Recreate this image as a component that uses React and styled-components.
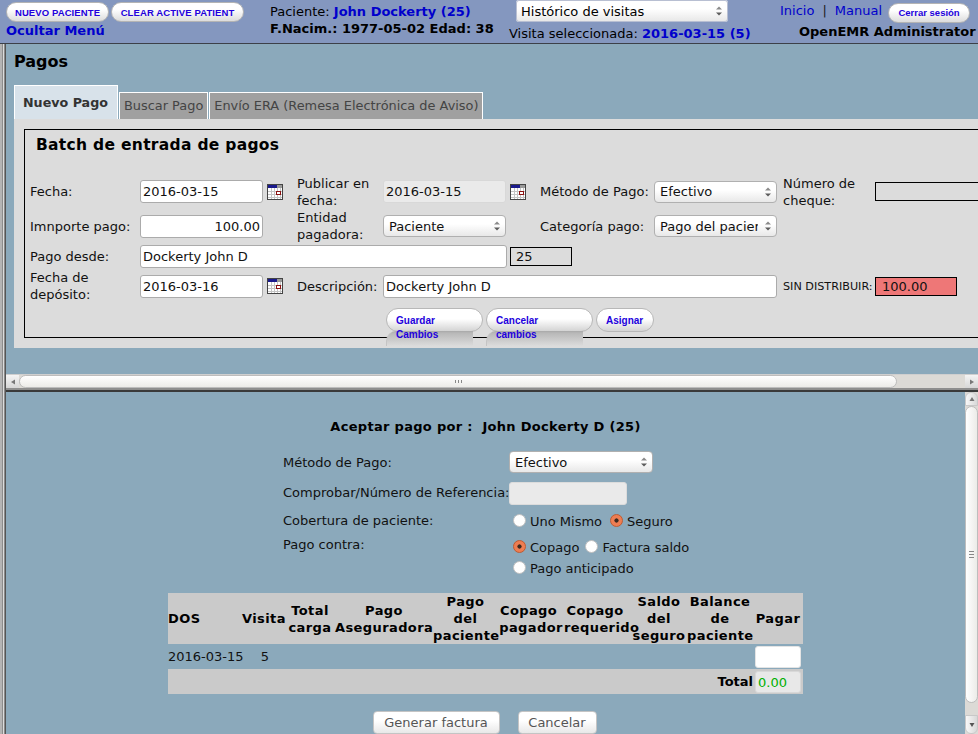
import React from 'react';
import styled, { createGlobalStyle } from 'styled-components';

const Global = createGlobalStyle`
  html, body { margin: 0; padding: 0; height: 734px; overflow: hidden; }
  body { font-family: "DejaVu Sans", sans-serif; font-size: 13px; color: #000; }
  * { box-sizing: border-box; }
`;

const Page = styled.div`
  width: 978px;
  height: 734px;
  display: flex;
  flex-direction: column;
  overflow: hidden;
`;

const Header = styled.header`
  height: 44px;
  flex: none;
  display: grid;
  grid-template-columns: 264px 245px 262px 207px;
  background: #8497bf;
  border-bottom: 1px solid #3c4048;
`;

const HeaderCol = styled.div`
  display: flex;
  flex-direction: column;
  padding: ${p => p.$pad || '0'};
  white-space: nowrap;
`;

const ButtonRow = styled.div`
  display: flex;
  gap: 2px;
  padding: 2px 0 0 6px;
`;

const PillButton = styled.a`
  display: inline-flex;
  align-items: center;
  justify-content: center;
  height: 20px;
  width: ${p => p.$w}px;
  border: 1px solid #b4b4b4;
  border-radius: 10px;
  background: linear-gradient(#fff 35%, #dcdcdc);
  color: #2200dd;
  font: bold 9.5px "Liberation Sans", sans-serif;
  letter-spacing: 0.1px;
  white-space: nowrap;
`;

const HideMenu = styled.a`
  font-weight: bold;
  font-size: 13px;
  line-height: 16px;
  color: #0000cc;
  padding: 0 0 0 6px;
  margin-top: 1px;
`;

const PatientLine = styled.div`
  font-size: 13px;
  line-height: 18px;
  margin-top: ${p => p.$mt || 0}px;
`;

const PatientLink = styled.span`
  font-weight: bold;
  color: #0000cc;
`;

const BoldLine = styled.div`
  font-weight: bold;
  font-size: 13px;
  line-height: 16px;
`;

const VisitSelect = styled.div`
  width: 212px;
  height: 22px;
  margin-left: 7px;
  display: flex;
  align-items: center;
  justify-content: space-between;
  padding: 0 5px 0 5px;
  background: linear-gradient(#fff 40%, #e6e6e6);
  border-radius: 3px;
  box-shadow: 0 0 0 1px #b8bfd2 inset;
  font-size: 13px;
`;

const ArrowsSvg = styled.svg`
  width: 8px;
  height: 12px;
  flex: none;
`;

const SelectArrows = () => (
  <ArrowsSvg viewBox="0 0 8 12">
    <path d="M4 1.5 7 4.5H1z" fill="#8a8a8a" />
    <path d="M4 10.5 1 7.5h6z" fill="#5c5c5c" />
  </ArrowsSvg>
);

const TopLinks = styled.div`
  display: flex;
  align-items: center;
  height: 21px;
  font-size: 13px;
  color: #0000cc;
`;

const LinkSep = styled.span`
  color: #222;
  margin: 0 8px;
`;

const SignOut = styled(PillButton)`
  margin-left: 6px;
  margin-top: 4px;
  flex: none;
  letter-spacing: 0;
`;

const UserName = styled.div`
  font-weight: bold;
  font-size: 13px;
  line-height: 16px;
  margin-top: 3px;
  padding-left: 19px;
`;

const Body = styled.div`
  flex: 1;
  min-height: 0;
  display: flex;
`;

const LeftEdge = styled.div`
  width: 6px;
  flex: none;
  background: linear-gradient(90deg, #b4b4b4 0 2px, #8c8c8c 2px 3px, #dcdcdc 3px 4px, #8a8a8a 4px 5px, #555 5px);
`;

const Frames = styled.div`
  flex: 1;
  min-width: 0;
  display: flex;
  flex-direction: column;
`;

const TopFrame = styled.section`
  height: 330px;
  flex: none;
  background: #8ba9bb;
  padding: 0 0 0 8px;
  overflow: hidden;
`;

const PageTitle = styled.h1`
  margin: 0;
  padding-top: 8px;
  height: 41px;
  font-size: 16px;
  line-height: 19px;
  font-weight: bold;
`;

const Tabs = styled.div`
  display: flex;
  align-items: flex-end;
  height: 34px;
  gap: 1px;
`;

const Tab = styled.div`
  height: 27px;
  padding: 0 4px;
  line-height: 26px;
  border: 1px solid #fff;
  border-bottom: none;
  background: #a0a0a0;
  color: #444;
  font-size: 12.9px;
  white-space: nowrap;
`;

const ActiveTab = styled(Tab)`
  width: 104px;
  height: 34px;
  padding: 0 0 0 8px;
  line-height: 34px;
  background: #d8e2ea;
  color: #333;
  font-size: 12.7px;
  font-weight: bold;
`;

const TabPanel = styled.div`
  background: #dcdcdc;
  height: 229px;
  width: 990px;
  padding: 10px 0 0 10px;
`;

const BatchBox = styled.div`
  height: 209px;
  border: 1px solid #000;
  border-right: none;
`;

const BatchTitle = styled.h2`
  margin: 0;
  height: 45px;
  padding: 5px 0 0 11px;
  font-size: 15.5px;
  line-height: 20px;
  font-weight: bold;
  letter-spacing: 0.3px;
`;

const BatchGrid = styled.div`
  display: grid;
  grid-template-columns: 110px 157px 86px 157px 114px 129px 92px 120px;
  grid-template-rows: 33px 36px 24px 36px;
  padding-left: 5px;
  align-items: center;
  font-size: 13px;
  line-height: 17px;
  color: #111;
`;

const TextField = styled.div`
  flex: none;
  width: ${p => p.$w}px;
  height: 23px;
  padding: 0 2px;
  background: ${p => p.$off ? '#eaeaea' : '#fff'};
  border: 1px solid ${p => p.$off ? '#d8d8d8' : '#ababab'};
  border-radius: 3px;
  font-size: 13px;
  line-height: 21px;
  text-align: ${p => p.$right ? 'right' : 'left'};
  overflow: hidden;
  white-space: nowrap;
`;

const WideCell = styled.div`
  display: flex;
  align-items: center;
  grid-column: ${p => p.$span};
`;

const DateCell = styled.div`
  display: flex;
  align-items: center;
  gap: 4px;
`;

const CalSvg = styled.svg`
  width: 16px;
  height: 16px;
  flex: none;
`;

const CalIcon = () => (
  <CalSvg viewBox="0 0 16 16" shapeRendering="crispEdges">
    <rect x="0.5" y="0.5" width="15" height="15" fill="#fff" stroke="#444" />
    <rect x="1" y="1" width="9" height="3" fill="#1a1a8c" />
    <rect x="10" y="1" width="5" height="3" fill="#999" />
    <path d="M1 7h14M1 10h14M1 13h14M4 4v11M7 4v11M10 4v11M13 4v11" stroke="#c4c4c4" fill="none" />
    <rect x="9.5" y="7.5" width="4" height="3" fill="#fff" stroke="#8c1010" />
  </CalSvg>
);

const SelectBox = styled.div`
  width: ${p => p.$w}px;
  height: 22px;
  display: flex;
  align-items: center;
  justify-content: space-between;
  padding: 0 4px 0 5px;
  background: linear-gradient(#fff 40%, #e8e8e8);
  border: 1px solid #b0b0b0;
  border-radius: 4px;
  font-size: 13px;
  white-space: nowrap;
`;

const SelectValue = styled.span`
  width: ${p => p.$w};
  overflow: hidden;
`;

const ReadBox = styled.div`
  flex: none;
  width: ${p => p.$w}px;
  height: 19px;
  padding-left: ${p => p.$pad || 0}px;
  border: 1px solid #000;
  background: ${p => p.$bg || 'transparent'};
  font-size: 13px;
  line-height: 17px;
  margin-left: ${p => p.$ml || 0}px;
`;

const SmallLabel = styled.span`
  font-size: 11.2px;
  white-space: nowrap;
`;

const ActionRow = styled.div`
  display: flex;
  gap: 3px;
  padding: 4px 0 0 361px;
  height: 40px;
  align-items: flex-start;
`;

const ActionStack = styled.div`
  display: flex;
  flex-direction: column;
  width: ${p => p.$w}px;
`;

const ActionPill = styled.a`
  display: block;
  height: 24px;
  padding: 0 0 0 9px;
  border: 1px solid #b8b8b8;
  border-radius: 12px;
  background: linear-gradient(#fff 45%, #d4d4d4);
  color: #2200dd;
  font: bold 10px/23px "Liberation Sans", sans-serif;
  white-space: nowrap;
`;

const ActionTail = styled.a`
  display: block;
  width: ${p => p.$w}px;
  height: 15px;
  margin-top: -1px;
  padding-left: 9px;
  border-left: 1px solid #c4c4c4;
  border-top-left-radius: 10px;
  background: linear-gradient(#a8a8a8, #b8b8b8 2px, #dcdcdc);
  color: #2200dd;
  font: bold 10px/8px "Liberation Sans", sans-serif;
  position: relative;
`;

const HBar = styled.div`
  height: 14px;
  flex: none;
  display: flex;
  background: #8ba9bb;
  border-top: 1px solid #cfcfcf;
`;

const ArrowBtn = styled.div`
  flex: none;
  width: 13px;
  display: flex;
  align-items: center;
  justify-content: center;
  background: linear-gradient(#f4f4f4, #d6d6d6);
`;

const TriSvg = styled.svg`
  width: 6px;
  height: 6px;
  flex: none;
`;

const Tri = ({ points, fill = '#777' }) => (
  <TriSvg viewBox="0 0 6 6"><polygon points={points} fill={fill} /></TriSvg>
);

const HTrack = styled.div`
  flex: 1;
  display: flex;
  background: #dcdad6;
  padding-right: 68px;
`;

const HThumb = styled.div`
  flex: 1;
  display: flex;
  align-items: center;
  justify-content: center;
  background: linear-gradient(#fff, #ecebe8);
  border: 1px solid #bdbdbd;
  border-radius: 7px;
`;

const GripSvg = styled.svg`
  flex: none;
`;

const GripH = () => (
  <GripSvg width="7" height="3" viewBox="0 0 7 3" shapeRendering="crispEdges">
    <path d="M.5 0v3M3.5 0v3M6.5 0v3" stroke="#888" />
  </GripSvg>
);

const GripV = () => (
  <GripSvg width="5" height="7" viewBox="0 0 5 7" shapeRendering="crispEdges">
    <path d="M0 .5h5M0 3.5h5M0 6.5h5" stroke="#888" />
  </GripSvg>
);

const Splitter = styled.div`
  height: 4px;
  flex: none;
  background: linear-gradient(#8e8e8e 0 2px, #3a3a3a 2px);
`;

const BottomFrame = styled.section`
  flex: 1;
  min-height: 0;
  display: flex;
  background: #8ba9bb;
  overflow: hidden;
`;

const PayArea = styled.div`
  flex: 1;
  min-width: 0;
  display: flex;
  flex-direction: column;
  align-items: flex-start;
  padding: 26px 0 0 162px;
`;

const PayTitle = styled.div`
  width: 635px;
  text-align: center;
  font-weight: bold;
  font-size: 13px;
  letter-spacing: 0.3px;
  line-height: 18px;
  white-space: pre;
`;

const PayForm = styled.div`
  display: grid;
  grid-template-columns: 226px auto;
  grid-template-rows: 29px 32px 24px 46px;
  margin: 15px 0 0 115px;
  align-items: start;
  font-size: 13px;
  color: #111;
`;

const PayLabel = styled.div`
  line-height: 17px;
  padding-top: ${p => p.$pt || 0}px;
  white-space: nowrap;
`;

const RefField = styled(TextField)`
  margin-top: 2px;
  border-color: #dcdcdc;
`;

const RadioWrap = styled.div`
  display: flex;
  flex-wrap: wrap;
  width: 190px;
  padding: ${p => p.$pt || 0}px 0 0 4px;
  row-gap: 4px;
`;

const RadioItem = styled.label`
  display: inline-flex;
  align-items: center;
  gap: 4px;
  height: 17px;
  margin-right: ${p => p.$mr || 6}px;
  white-space: nowrap;
`;

const RadioDot = styled.span`
  width: 13px;
  height: 13px;
  flex: none;
  border-radius: 50%;
  position: relative;
  top: -1px;
  border: 1px solid ${p => p.$on ? '#c05a30' : '#c0c0c0'};
  background: ${p => p.$on
    ? 'radial-gradient(circle, #3c2a20 0 1.8px, #ee7d52 2.4px)'
    : '#fff'};
`;

const Radio = ({ on, mr, children }) => (
  <RadioItem $mr={mr}><RadioDot $on={on} />{children}</RadioItem>
);

const PayTable = styled.table`
  margin-top: 11px;
  width: 635px;
  border-collapse: collapse;
  table-layout: fixed;
  font-size: 13px;
  line-height: 17px;
`;

const HeadRow = styled.tr`
  background: #cacaca;
  height: 51px;
`;

const Th = styled.th`
  padding: 0;
  font-weight: bold;
  color: #000;
  text-align: ${p => p.$left ? 'left' : 'center'};
  letter-spacing: 0.4px;
`;

const DataRow = styled.tr`
  height: 25px;
`;

const Td = styled.td`
  padding: 0 0 0 ${p => p.$center ? 3 : 0}px;
  color: #111;
  white-space: nowrap;
  text-align: ${p => p.$center ? 'center' : 'left'};
`;

const TotalRow = styled.tr`
  height: 25px;
  background: #cacaca;
`;

const TotalLabel = styled.td`
  padding: 0;
  text-align: right;
  font-weight: bold;
`;

const PayInput = styled.div`
  width: 46px;
  height: 22px;
  margin-left: 2px;
  padding-left: 2px;
  background: ${p => p.$off ? '#e8e8e8' : '#fff'};
  border: 1px solid ${p => p.$off ? '#d8d8d8' : '#e4e4e4'};
  border-radius: 3px;
  color: #00b000;
  line-height: 22px;
`;

const FooterButtons = styled.div`
  width: 633px;
  display: flex;
  justify-content: center;
  gap: 18px;
  margin-top: 17px;
`;

const PlainButton = styled.div`
  width: ${p => p.$w}px;
  height: 23px;
  text-align: center;
  background: linear-gradient(#fff 40%, #e8e8e8);
  border: 1px solid #c4c4c4;
  border-radius: 4px;
  color: #555;
  font-size: 13px;
  line-height: 22px;
`;

const VBar = styled.div`
  width: 13px;
  flex: none;
  display: flex;
  flex-direction: column;
  background: #dcdad6;
`;

const VArrow = styled.div`
  height: ${p => p.$h}px;
  flex: none;
  display: flex;
  align-items: center;
  justify-content: center;
  background: linear-gradient(90deg, #f8f8f8, #d8d8d8);
  border: 1px solid #c8c8c8;
  border-radius: ${p => p.$r || '6px 6px 0 0'};
`;

const VThumb = styled.div`
  flex: none;
  height: ${p => p.$h}px;
  display: flex;
  align-items: center;
  justify-content: center;
  background: linear-gradient(90deg, #fff, #ecebe8);
  border: 1px solid #bdbdbd;
  border-radius: 7px;
`;

const VTrackFill = styled.div`
  flex: 1;
`;

const widths = [74, 43, 50, 98, 65, 66, 67, 56, 66, 50];

export default function App() {
  return (
    <Page>
      <Global />
      <Header>
        <HeaderCol>
          <ButtonRow>
            <PillButton $w={103}>NUEVO PACIENTE</PillButton>
            <PillButton $w={133}>CLEAR ACTIVE PATIENT</PillButton>
          </ButtonRow>
          <HideMenu>Ocultar Menú</HideMenu>
        </HeaderCol>
        <HeaderCol $pad="3px 0 0 6px">
          <PatientLine>Paciente: <PatientLink>John Dockerty (25)</PatientLink></PatientLine>
          <BoldLine>F.Nacim.: 1977-05-02 Edad: 38</BoldLine>
        </HeaderCol>
        <HeaderCol>
          <VisitSelect>Histórico de visitas<SelectArrows /></VisitSelect>
          <PatientLine $mt={3}>Visita seleccionada: <PatientLink>2016-03-15 (5)</PatientLink></PatientLine>
        </HeaderCol>
        <HeaderCol $pad="0 0 0 9px">
          <TopLinks>Inicio<LinkSep>|</LinkSep>Manual<SignOut $w={82}>Cerrar sesión</SignOut></TopLinks>
          <UserName>OpenEMR Administrator</UserName>
        </HeaderCol>
      </Header>
      <Body>
        <LeftEdge />
        <Frames>
          <TopFrame>
            <PageTitle>Pagos</PageTitle>
            <Tabs>
              <ActiveTab>Nuevo Pago</ActiveTab>
              <Tab>Buscar Pago</Tab>
              <Tab>Envío ERA (Remesa Electrónica de Aviso)</Tab>
            </Tabs>
            <TabPanel>
              <BatchBox>
                <BatchTitle>Batch de entrada de pagos</BatchTitle>
                <BatchGrid>
                  <span>Fecha:</span>
                  <DateCell><TextField $w={123}>2016-03-15</TextField><CalIcon /></DateCell>
                  <span>Publicar en fecha:</span>
                  <DateCell><TextField $w={123} $off>2016-03-15</TextField><CalIcon /></DateCell>
                  <span>Método de Pago:</span>
                  <SelectBox $w={123}>Efectivo<SelectArrows /></SelectBox>
                  <span>Número de cheque:</span>
                  <ReadBox $w={120} />

                  <span>Imnporte pago:</span>
                  <TextField $w={123} $right>100.00</TextField>
                  <span>Entidad pagadora:</span>
                  <SelectBox $w={123}>Paciente<SelectArrows /></SelectBox>
                  <span>Categoría pago:</span>
                  <SelectBox $w={123}><SelectValue $w="98px">Pago del paciente</SelectValue><SelectArrows /></SelectBox>
                  <WideCell $span="7 / 9" />

                  <span>Pago desde:</span>
                  <WideCell $span="2 / 6">
                    <TextField $w={367}>Dockerty John D</TextField>
                    <ReadBox $w={62} $pad={5} $ml={3}>25</ReadBox>
                  </WideCell>
                  <WideCell $span="6 / 9" />

                  <span>Fecha de depósito:</span>
                  <DateCell><TextField $w={123}>2016-03-16</TextField><CalIcon /></DateCell>
                  <span>Descripción:</span>
                  <WideCell $span="4 / 7"><TextField $w={394}>Dockerty John D</TextField></WideCell>
                  <SmallLabel>SIN DISTRIBUIR:</SmallLabel>
                  <ReadBox $w={82} $pad={6} $bg="#ee7777">100.00</ReadBox>
                </BatchGrid>
                <ActionRow>
                  <ActionStack $w={97}>
                    <ActionPill>Guardar</ActionPill>
                    <ActionTail $w={87}>Cambios</ActionTail>
                  </ActionStack>
                  <ActionStack $w={107}>
                    <ActionPill>Cancelar</ActionPill>
                    <ActionTail $w={97}>cambios</ActionTail>
                  </ActionStack>
                  <ActionStack $w={58}>
                    <ActionPill>Asignar</ActionPill>
                  </ActionStack>
                </ActionRow>
              </BatchBox>
            </TabPanel>
          </TopFrame>
          <HBar>
            <ArrowBtn><Tri points="1,3 5,0.5 5,5.5" /></ArrowBtn>
            <HTrack><HThumb><GripH /></HThumb></HTrack>
            <ArrowBtn><Tri points="5,3 1,0.5 1,5.5" /></ArrowBtn>
          </HBar>
          <Splitter />
          <BottomFrame>
            <PayArea>
              <PayTitle>{'Aceptar pago por :  John Dockerty D (25)'}</PayTitle>
              <PayForm>
                <PayLabel $pt={3}>Método de Pago:</PayLabel>
                <SelectBox $w={144}>Efectivo<SelectArrows /></SelectBox>
                <PayLabel $pt={4}>Comprobar/Número de Referencia:</PayLabel>
                <RefField $w={118} $off />
                <PayLabel>Cobertura de paciente:</PayLabel>
                <RadioWrap $pt={1}>
                  <Radio mr={8}>Uno Mismo</Radio>
                  <Radio on>Seguro</Radio>
                </RadioWrap>
                <PayLabel>Pago contra:</PayLabel>
                <RadioWrap $pt={3}>
                  <Radio on>Copago</Radio>
                  <Radio>Factura saldo</Radio>
                  <Radio>Pago anticipado</Radio>
                </RadioWrap>
              </PayForm>
              <PayTable>
                <colgroup>
                  {widths.map((w, i) => <col key={i} style={{ width: w }} />)}
                </colgroup>
                <thead>
                  <HeadRow>
                    <Th $left>DOS</Th>
                    <Th>Visita</Th>
                    <Th>Total carga</Th>
                    <Th>Pago Aseguradora</Th>
                    <Th>Pago del paciente</Th>
                    <Th>{'Copago\u00a0 pagador'}</Th>
                    <Th>{'Copago\u00a0 requerido'}</Th>
                    <Th>Saldo del seguro</Th>
                    <Th>Balance de paciente</Th>
                    <Th>Pagar</Th>
                  </HeadRow>
                </thead>
                <tbody>
                  <DataRow>
                    <Td>2016-03-15</Td>
                    <Td $center>5</Td>
                    <Td colSpan={7} />
                    <Td><PayInput /></Td>
                  </DataRow>
                  <TotalRow>
                    <TotalLabel colSpan={9}>Total</TotalLabel>
                    <Td><PayInput $off>0.00</PayInput></Td>
                  </TotalRow>
                </tbody>
              </PayTable>
              <FooterButtons>
                <PlainButton $w={127}>Generar factura</PlainButton>
                <PlainButton $w={79}>Cancelar</PlainButton>
              </FooterButtons>
            </PayArea>
            <VBar>
              <VArrow $h={14}><Tri points="3,1 5.5,5 0.5,5" /></VArrow>
              <VThumb $h={297}><GripV /></VThumb>
              <VTrackFill />
              <VArrow $h={19} $r="0 0 6px 6px"><Tri points="3,5 5.5,1 0.5,1" fill="#555" /></VArrow>
            </VBar>
          </BottomFrame>
        </Frames>
      </Body>
    </Page>
  );
}
